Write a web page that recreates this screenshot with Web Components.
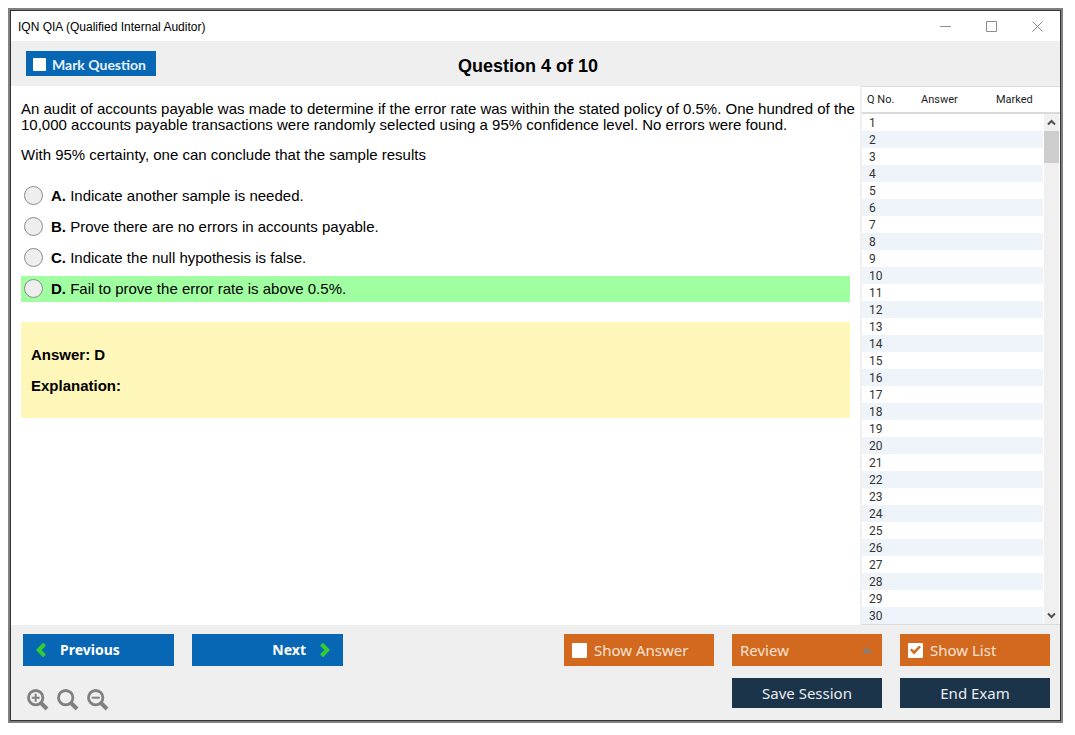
<!DOCTYPE html>
<html lang="en">
<head>
<meta charset="utf-8">
<meta name="viewport" content="width=device-width, initial-scale=1">
<title>IQN QIA (Qualified Internal Auditor)</title>
<style>
  html, body { height: 100%; margin: 0; }
  body {
    box-sizing: border-box;
    padding: 8px 12px 12px 8px;
    background: #fff;
    color: #000;
    font: 15px/16px "Liberation Sans", Arial, sans-serif;
  }
</style>
</head>
<body>
<exam-window></exam-window>

<script>
const define = (name, html, setup) => {
  const template = document.createElement('template');
  template.innerHTML = html;
  customElements.define(name, class extends HTMLElement {
    constructor() {
      super();
      this.attachShadow({ mode: 'open' }).append(template.content.cloneNode(true));
    }
    connectedCallback() { if (setup) setup(this, this.shadowRoot); }
  });
};

/* Title bar with caption buttons */
define('title-bar', `
<style>
  :host { display: flex; align-items: center; height: 30px; background: #fff; font-size: 12px; line-height: 14px; padding: 0 0 0 7px; }
  .title { flex: 1; padding-top: 2px; }
  button { width: 46px; height: 28px; padding: 0; border: 0; background: none; display: grid; place-items: center; }
  svg { display: block; fill: none; stroke: #8c8c8c; }
</style>
<span class="title"><slot></slot></span>
<button aria-label="Minimize"><svg width="11" height="11"><path d="M0 5.5H11"/></svg></button>
<button aria-label="Maximize"><svg width="11" height="11"><path d="M.5 .5H10.5V10.5H.5Z"/></svg></button>
<button aria-label="Close"><svg width="11" height="11"><path d="M.5 .5L10.5 10.5M10.5 .5L.5 10.5"/></svg></button>
`);

/* Coloured push button */
define('exam-button', `
<style>
  :host { display: block; }
  button {
    display: flex; align-items: center; justify-content: center; gap: 14px;
    width: 100%; height: 100%; padding: 0 13px; border: 0;
    background: #0767b5; color: #fff; font: bold 14px/20px "Noto Sans", sans-serif;
  }
  :host([kind="dark"]) button { background: #1b344a; color: #e8edf0; font: 15px/20px "Noto Sans", sans-serif; }
  :host([kind="menu"]) button { background: #d2691e; color: #f8e3d5; font: 15px/20px "Noto Sans", sans-serif; justify-content: space-between; padding: 0 10px 0 8px; }
  :host([align="start"]) button { justify-content: flex-start; }
  :host([align="end"]) button { justify-content: flex-end; }
</style>
<button type="button"><slot name="before"></slot><slot></slot><slot name="after"></slot></button>
`, (host, root) => {
  if (host.getAttribute('kind') === 'menu') root.querySelector('button').setAttribute('aria-haspopup', 'menu');
});

/* Coloured tick-box button */
define('exam-toggle', `
<style>
  :host { display: block; }
  label {
    display: flex; align-items: center; gap: 7px; box-sizing: border-box;
    height: 100%; padding: 0 8px;
    background: #d2691e; color: #f8e3d5; font: 15px/20px "Noto Sans", sans-serif;
  }
  input { appearance: none; flex: none; width: 15px; height: 15px; margin: 0; background: #fff; border-radius: 1px; display: grid; place-items: center; }
  input:checked::before {
    content: ""; width: 11px; height: 9px; background: #d2691e;
    clip-path: polygon(0 50%, 16% 32%, 36% 58%, 84% 0, 100% 18%, 37% 100%);
  }
  :host([kind="blue"]) label { background: #0767b5; color: #e9f1f9; font: bold 14px/20px Lato, sans-serif; gap: 6px; padding: 2px 7px 0; }
  :host([kind="blue"]) input { width: 13px; height: 13px; }
</style>
<label><input type="checkbox"><slot></slot></label>
`, (host, root) => { root.querySelector('input').checked = host.hasAttribute('checked'); });

/* The list of answers */
define('answer-options', `
<style>
  :host { display: block; }
  fieldset { display: grid; gap: 5px; margin: 0; padding: 0; border: 0; }
  label { display: flex; align-items: center; gap: 8px; height: 26px; padding-left: 3px; }
  label.correct { background: #a0ffa0; }
  input { appearance: none; box-sizing: border-box; width: 19px; height: 19px; margin: 0 0 1px; border: 1px solid #8c8c8c; border-radius: 50%; background: #eee; }
  input:checked { border-width: 6px; }
</style>
<fieldset aria-label="Answers"></fieldset>
`, (host, root) => {
  const correct = host.getAttribute('correct');
  const box = root.querySelector('fieldset');
  box.replaceChildren(...[...host.children].map((item, i) => {
    const letter = 'ABCDEF'[i];
    const label = document.createElement('label');
    label.className = letter === correct ? 'correct' : '';
    label.innerHTML = `<input type="radio" name="answer" value="${letter}"><span><b>${letter}.</b> ${item.textContent}</span>`;
    return label;
  }));
});

/* Answer and explanation */
define('answer-note', `
<style>
  :host { display: grid; gap: 15px; padding: 25px 10px 24px; background: #fff7b9; font-weight: bold; }
</style>
<slot></slot>
`);

/* Question list at the right */
define('question-list', `
<style>
  :host { display: flex; border: solid #dadada; border-width: 1px 0; border-left: 2px solid #f0f0f0; background: #fff; font: 12px/15px Roboto, sans-serif; color: #333; }
  table { flex: 1; border-collapse: separate; border-spacing: 0; table-layout: fixed; width: 0; }
  th { height: 25px; padding: 0 0 0 5px; font: 11px/25px Roboto, sans-serif; text-align: left; border-bottom: 2px solid #dadada; color: #222; }
  th:nth-child(1) { width: 49px; }
  th:nth-child(2) { width: 70px; }
  td { height: 15px; padding: 2px 0 0 7px; }
  tbody tr:nth-child(even) { background: #eef4f9; }
  .side { display: flex; flex-direction: column; width: 17px; }
  .head { height: 25px; border-bottom: 2px solid #dadada; }
  .bar { flex: 1; display: flex; flex-direction: column; align-items: stretch; background: #f0f0f0; margin: 0 1px; }
  .bar button { height: 17px; padding: 0; border: 0; background: none; display: grid; place-items: center; }
  .thumb { height: 32px; background: #cdcdcd; }
  .track { flex: 1; }
  svg { display: block; fill: none; stroke: #505050; stroke-width: 2; }
</style>
<table>
  <thead><tr><th>Q No.</th><th>Answer</th><th>Marked</th></tr></thead>
  <tbody></tbody>
</table>
<div class="side">
  <div class="head"></div>
  <div class="bar">
    <button aria-label="Scroll up"><svg width="9" height="7"><path d="M1 5.5L4.5 2L8 5.5"/></svg></button>
    <div class="thumb"></div>
    <div class="track"></div>
    <button aria-label="Scroll down"><svg width="9" height="7"><path d="M1 1.5L4.5 5L8 1.5"/></svg></button>
  </div>
</div>
`, (host, root) => {
  const count = Number(host.getAttribute('count'));
  root.querySelector('tbody').innerHTML = Array.from({ length: count }, (_, i) =>
    `<tr><td>${i + 1}</td><td></td><td></td></tr>`).join('');
});

/* Zoom buttons */
define('zoom-tools', `
<style>
  :host { display: flex; gap: 8px; align-items: center; }
  button { width: 22px; height: 22px; padding: 0; border: 0; background: none; }
  svg { display: block; fill: none; stroke: #808080; }
</style>
<button aria-label="Zoom in"><svg width="22" height="22"><circle cx="8.7" cy="8.7" r="7.2" stroke-width="2.8"/><path d="M14 14L20 20" stroke-width="4"/><path d="M4.7 8.7H12.7M8.7 4.7V12.7" stroke-width="2"/></svg></button>
<button aria-label="Reset zoom"><svg width="22" height="22"><circle cx="8.7" cy="8.7" r="7.2" stroke-width="2.8"/><path d="M14 14L20 20" stroke-width="4"/></svg></button>
<button aria-label="Zoom out"><svg width="22" height="22"><circle cx="8.7" cy="8.7" r="7.2" stroke-width="2.8"/><path d="M14 14L20 20" stroke-width="4"/><path d="M4.7 8.7H12.7" stroke-width="2"/></svg></button>
`);

/* Bottom bar */
define('exam-footer', `
<style>
  :host {
    display: grid; grid-template-columns: 151px 151px 1fr 150px 150px 150px; grid-template-rows: 32px 30px;
    column-gap: 18px; row-gap: 12px; padding: 9px 10px 12px 12px; background: #efefef;
  }
  .answer { grid-column: 4; }
  zoom-tools { grid-column: 1 / 3; padding: 14px 0 0 4px; }
  .save { grid-column: 5; }
  svg { display: block; fill: none; }
</style>
<exam-button align="start"><svg slot="before" width="10" height="14" stroke="#32cd32" stroke-width="4"><path d="M8.5 1L2.8 7L8.5 13"/></svg>Previous</exam-button>
<exam-button align="end">Next<svg slot="after" width="10" height="14" stroke="#32cd32" stroke-width="4"><path d="M1.5 1L7.2 7L1.5 13"/></svg></exam-button>
<exam-toggle class="answer">Show Answer</exam-toggle>
<exam-button kind="menu">Review<svg slot="after" width="10" height="6"><path d="M0 6L5 0L10 6Z" fill="#858078"/></svg></exam-button>
<exam-toggle checked>Show List</exam-toggle>
<zoom-tools></zoom-tools>
<exam-button class="save" kind="dark">Save Session</exam-button>
<exam-button kind="dark">End Exam</exam-button>
`);

/* Whole window */
define('exam-window', `
<style>
  :host {
    box-sizing: border-box; display: flex; flex-direction: column; min-height: 100%;
    border: 2px solid #808080;
  }
  .frame { flex: 1; display: flex; flex-direction: column; border: 1px solid #333; }
  header { display: grid; grid-template-columns: 1fr auto 1fr; align-items: center; height: 45px; padding: 0 30px 0 15px; background: #efefef; }
  header exam-toggle { width: 130px; height: 25px; }
  h1 { margin: 0; font-size: 18px; line-height: 20px; padding-top: 4px; }
  main { flex: 1; display: grid; grid-template-columns: 1fr 200px; }
  article { padding: 15px 4px 0 10px; }
  p { margin: 0 0 14px; }
  answer-options, answer-note { margin: 20px 6px 20px 0; }
</style>
<div class="frame">
  <title-bar>IQN QIA (Qualified Internal Auditor)</title-bar>
  <header>
    <exam-toggle kind="blue">Mark Question</exam-toggle>
    <h1>Question 4 of 10</h1>
  </header>
  <main>
    <article>
      <p>An audit of accounts payable was made to determine if the error rate was within the stated policy of 0.5%. One hundred of the 10,000 accounts payable transactions were randomly selected using a 95% confidence level. No errors were found.</p>
      <p>With 95% certainty, one can conclude that the sample results</p>
      <answer-options correct="D">
        <span>Indicate another sample is needed.</span>
        <span>Prove there are no errors in accounts payable.</span>
        <span>Indicate the null hypothesis is false.</span>
        <span>Fail to prove the error rate is above 0.5%.</span>
      </answer-options>
      <answer-note><span>Answer: D</span><span>Explanation:</span></answer-note>
    </article>
    <question-list count="30"></question-list>
  </main>
  <exam-footer></exam-footer>
</div>
`);
</script>
</body>
</html>
